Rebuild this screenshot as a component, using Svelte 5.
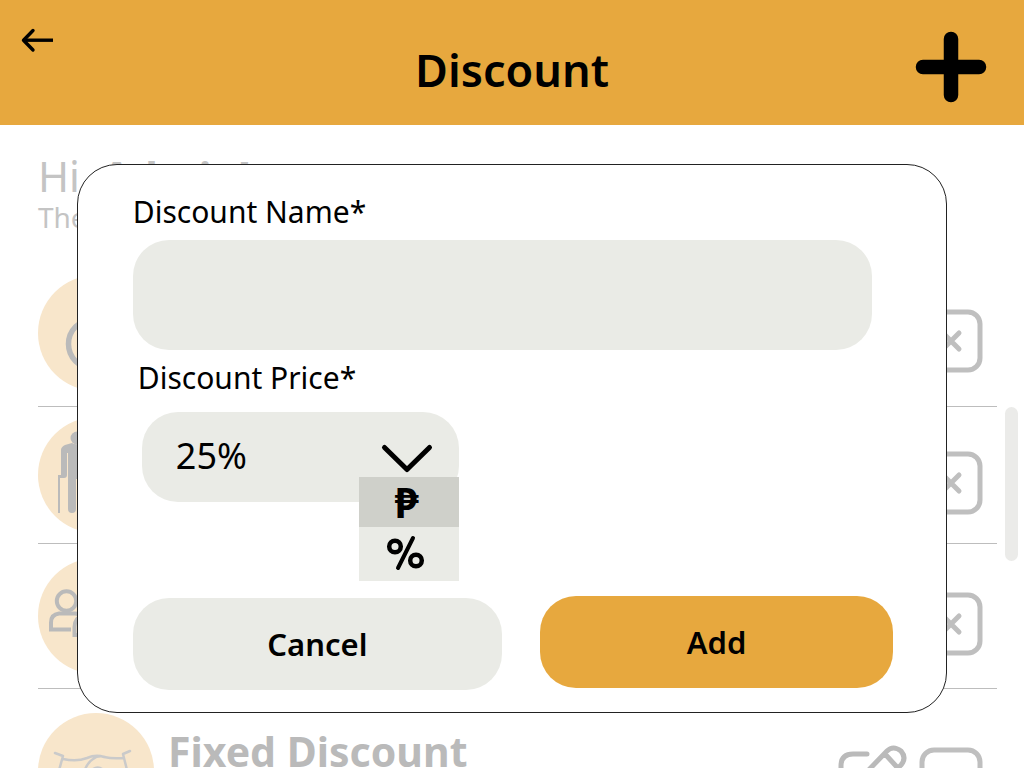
<script>
  let name = $state('');
  let price = $state('25%');
  let unit = $state('peso');
  const rows = ['disability', 'senior', 'family', 'fixed'];
</script>

<div class="page">
  <header>
    <button class="back" aria-label="Back">
      <svg width="34" height="26" viewBox="0 0 34 26" fill="none" stroke="#000" stroke-width="3.4">
        <path d="M33 13.2H3" />
        <path d="M13 3.500 3.500 13.200l9.500 9.800" stroke-linecap="round" stroke-linejoin="round" />
      </svg>
    </button>
    <h1>Discount</h1>
    <button class="new" aria-label="New discount">
      <svg width="72" height="72" viewBox="0 0 72 72" fill="none" stroke="#000" stroke-width="14.500" stroke-linecap="round">
        <path d="M36 8v56M8 36h56" />
      </svg>
    </button>
  </header>

  <main>
    <p class="hello">Hi, <b>Admin!</b></p>
    <p class="intro">The</p>
    <ul>
      {#each rows as row}
        <li class={row}>
          <span class="avatar">
            <svg width="116" height="116" viewBox="0 0 116 116" fill="none" stroke="#bababa">
              {#if row === 'disability'}
                <circle cx="55" cy="69" r="24.500" stroke-width="5.500" />
              {:else if row === 'senior'}
                <g fill="#bababa" stroke="none">
                  <circle cx="39" cy="21" r="6.500" />
                  <path d="M23 33q0-3 4-5l7-2q3 2 7 1h9v35H38v30q0 4-4 4t-4-4V36h-1v22q0 3-3 3h-4v35h-2V58h3z" />
                </g>
              {:else if row === 'family'}
                <g stroke-width="4">
                  <circle cx="28.500" cy="43" r="9.700" />
                  <path d="M33 71.500H13v-7q0-8 8-9h16q4 0 8 4M36.500 79V69q0-9 8-12M35 77h42v-8q0-12-12-12H45" />
                  <circle cx="58" cy="43" r="11" />
                </g>
              {:else}
                <g stroke="#cacaca" stroke-width="2.500" stroke-linecap="round" stroke-linejoin="round">
                  <path d="m17 40 8 3-5 18M92 38l-7 3 5 20M25 46q14 3 24-1 9-4 17-1 9 2 19 1M46 60q2-9 9-14 5-4 12-2M55 56q5-3 9 0l12 9" />
                </g>
              {/if}
            </svg>
          </span>
          {#if row === 'fixed'}<h2>Fixed Discount</h2>{/if}
          <span class="actions">
            {#if row === 'fixed'}
              <button aria-label="Edit">
                <svg width="72" height="72" viewBox="0 0 72 72" fill="none" stroke="#bababa" stroke-width="5" stroke-linecap="round" stroke-linejoin="round">
                  <path d="M32 11H18Q6 11 6 23v32q0 13 13 13h32q12 0 12-13V41" />
                  <path d="m25 36 27-28q6-6 14 0 6 7 0 14L38 49l-15 4zM50 11l11 12" />
                </svg>
              </button>
            {/if}
            <button aria-label="Delete">
              <svg width="64" height="64" viewBox="0 0 64 64" fill="none" stroke="#bfbfbf" stroke-width="5" stroke-linecap="round">
                <rect x="3" y="3" width="58" height="58" rx="12" />
                {#if row !== 'fixed'}<path d="m24 24 16 16M40 24 24 40" />{/if}
              </svg>
            </button>
          </span>
        </li>
      {/each}
    </ul>
  </main>
  <div class="scroll"></div>

  <div class="overlay">
    <form class="dialog" role="dialog" aria-label="Discount" onsubmit={(e) => e.preventDefault()}>
      <label for="name">Discount Name*</label>
      <input id="name" class="name" bind:value={name} />
      <label for="price" class="price-label">Discount Price*</label>
      <div class="price">
        <input id="price" bind:value={price} />
        <button type="button" class="toggle" aria-label="Choose unit">
          <svg width="54" height="32" viewBox="0 0 54 32" fill="none" stroke="#000" stroke-width="5" stroke-linecap="round" stroke-linejoin="round">
            <path d="m4.500 4.500 22.500 22 22.500-22" />
          </svg>
        </button>
        <div class="menu">
          <button type="button" class:selected={unit === 'peso'} onclick={() => (unit = 'peso')}>₱</button>
          <button type="button" class:selected={unit === 'percent'} aria-label="Percent" onclick={() => (unit = 'percent')}>
            <svg width="42" height="40" viewBox="0 0 42 40" fill="none" stroke="#000" stroke-width="4.500">
              <circle cx="9" cy="12.500" r="5.800" />
              <circle cx="30" cy="26.500" r="5.800" />
              <path d="M27 4 12 34" stroke-width="4" stroke-linecap="round" />
            </svg>
          </button>
        </div>
      </div>
      <div class="buttons">
        <button type="button" class="cancel">Cancel</button>
        <button class="add">Add</button>
      </div>
    </form>
  </div>
</div>

<style>
  :global(body) { background: #fff; }
  * { box-sizing: border-box; }
  .page {
    position: relative;
    height: 100vh;
    overflow: hidden;
    font-family: "Noto Sans", sans-serif;
    color: #000;
  }
  button {
    font: inherit;
    color: inherit;
    background: none;
    border: 0;
    padding: 0;
    cursor: pointer;
  }
  input { font: inherit; color: inherit; border: 0; outline: 0; background: #eaebe6; min-width: 0; }
  svg { display: block; }
  p, h1, h2, ul { margin: 0; padding: 0; }
  header {
    height: 125px;
    background: #e7a83e;
    display: grid;
    grid-template-columns: 1fr auto 1fr;
    padding: 0 20px;
  }
  .back { align-self: start; justify-self: start; margin-top: 27px; }
  h1 { font-size: 45px; line-height: 60px; font-weight: 600; margin-top: 40px; }
  .new { align-self: start; justify-self: end; margin: 31px 17px 0 0; }
  main { padding: 25px 27px 0 38px; }
  .hello { font-size: 42px; line-height: 52px; color: #c4c4c4; font-weight: 400; }
  .hello b { font-weight: 700; }
  .intro { font-size: 28px; line-height: 30px; color: #c4c4c4; font-weight: 400; }
  ul { list-style: none; padding-top: 28px; }
  li {
    display: flex;
    align-items: center;
    gap: 14px;
    height: 145px;
    border-bottom: 1px solid #bdbdbd;
  }
  .disability { height: 147px; }
  .senior { height: 137px; }
  .fixed { height: 164px; border: 0; }
  .avatar { border-radius: 50%; background: #f8e6cb; flex: none; overflow: hidden; }
  h2 { font-size: 41px; line-height: 48px; font-weight: 700; color: #bababa; margin-bottom: 40px; }
  .actions { display: flex; align-items: center; gap: 12px; margin: 16px 14px 0 auto; }
  .scroll {
    position: absolute;
    right: 6px;
    top: 407px;
    width: 13px;
    height: 154px;
    border-radius: 7px;
    background: #ebebe9;
  }
  .overlay {
    position: absolute;
    inset: 0;
    display: flex;
    justify-content: center;
    align-items: start;
    padding-top: 164px;
  }
  .dialog {
    width: 85%;
    background: #fff;
    border: 1px solid #222;
    border-radius: 40px;
    padding: 29px 53px 22px 55px;
    display: flex;
    flex-direction: column;
  }
  label { font-size: 30px; line-height: 36px; }
  .name { height: 110px; border-radius: 36px; margin: 10px 21px 0 0; padding: 0 34px; font-size: 36px; }
  .price-label { margin: 10px 0 0 5px; }
  .price { position: relative; width: 317px; margin: 16px 0 0 9px; }
  .price input {
    display: block;
    width: 100%;
    height: 90px;
    border-radius: 36px;
    padding: 0 110px 4px 34px;
    font-size: 36px;
  }
  .toggle { position: absolute; right: 25px; top: 31px; }
  .menu { position: absolute; right: 0; top: 65px; width: 100px; background: #eaebe6; }
  .menu button {
    width: 100%;
    height: 54px;
    padding-right: 4px;
    display: flex;
    align-items: center;
    justify-content: center;
    font-size: 42px;
    line-height: 50px;
    font-weight: 700;
  }
  .menu .selected { background: #cfd0ca; height: 50px; }
  .buttons { display: flex; align-items: start; gap: 38px; margin-top: 94px; }
  .buttons button { height: 92px; border-radius: 36px; font-size: 31px; font-weight: 600; }
  .cancel { flex: 369; background: #eaebe6; margin-top: 2px; }
  .add { flex: 353; background: #e7a83e; }
</style>
